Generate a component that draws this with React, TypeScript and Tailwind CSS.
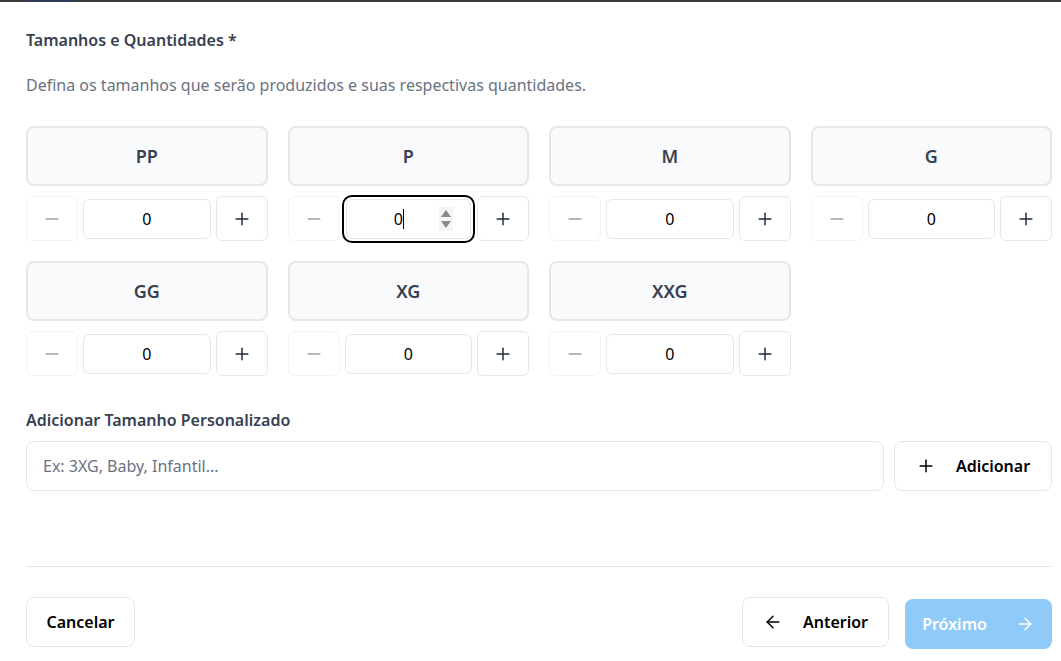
import { Minus, Plus, ArrowLeft, ArrowRight } from 'lucide-react';

const sizes = ['PP', 'P', 'M', 'G', 'GG', 'XG', 'XXG'];

function Spinner() {
    return (
        <svg width="14" height="24" viewBox="0 0 14 24" className="shrink-0">
            <rect x="0" y="0" width="14" height="24" fill="#f3f4f6" />
            <path d="M7 3 L12 10 L2 10 Z" fill="#8a8a8a" />
            <path d="M2 14 L12 14 L7 21 Z" fill="#8a8a8a" />
        </svg>
    );
}

function SizeCell({ label, focused }: { label: string; focused?: boolean }) {
    return (
        <div className="flex flex-col gap-[10px]">
            <div className="h-[60px] flex items-center justify-center rounded-lg border-2 border-gray-200 bg-gray-50">
                <span className="text-lg font-semibold text-[#374151]">{label}</span>
            </div>
            <div className="flex items-center gap-[5px]">
                <button className="w-[52px] h-[45px] shrink-0 flex items-center justify-center rounded-md border border-gray-100 bg-white text-gray-400">
                    <Minus className="w-5 h-5" strokeWidth={1.75} />
                </button>
                {focused ? (
                    <div className="flex-1 h-10 mx-[1px] flex items-center rounded-md border border-gray-200 bg-white pl-3 pr-[17px] outline-2 outline-offset-2 outline-black">
                        <div className="flex-1 flex justify-center items-center">
                            <span className="text-base text-black">0</span>
                            <span className="w-px h-5 bg-black" />
                        </div>
                        <Spinner />
                    </div>
                ) : (
                    <input
                        readOnly
                        value="0"
                        className="flex-1 min-w-0 h-10 rounded-md border border-gray-200 bg-white text-center text-base text-black outline-none"
                    />
                )}
                <button className="w-[52px] h-[45px] shrink-0 flex items-center justify-center rounded-md border border-gray-200 bg-white text-gray-800">
                    <Plus className="w-5 h-5" strokeWidth={1.75} />
                </button>
            </div>
        </div>
    );
}

export default function App() {
    return (
        <div className="w-[1061px] h-[661px] bg-white overflow-hidden font-['Noto_Sans',sans-serif]">
            <div className="h-[2px] bg-[#3b3b3b] flex">
                <div className="ml-[25px] w-[50px] bg-[#2b3a55]" />
            </div>
            <div className="pl-[26px] pr-[9px]">
                <h2 className="mt-[26px] text-base leading-6 font-semibold text-[#374151]">
                    Tamanhos e Quantidades *
                </h2>
                <p className="mt-[21px] text-base leading-6 text-gray-500">
                    Defina os tamanhos que serão produzidos e suas respectivas quantidades.
                </p>

                <div className="mt-[29px] grid grid-cols-4 gap-x-5 gap-y-5">
                    {sizes.map((s) => (
                        <SizeCell key={s} label={s} focused={s === 'P'} />
                    ))}
                </div>

                <h3 className="mt-[32px] text-base leading-6 font-semibold text-[#374151]">
                    Adicionar Tamanho Personalizado
                </h3>
                <div className="mt-[9px] flex gap-[10px]">
                    <input
                        placeholder="Ex: 3XG, Baby, Infantil..."
                        className="flex-1 h-[50px] rounded-lg border border-gray-200 px-4 text-base text-gray-900 placeholder:text-gray-500 outline-none"
                    />
                    <button className="w-[158px] h-[50px] flex items-center justify-center gap-5 rounded-lg border border-gray-200 bg-white text-base font-semibold text-black">
                        <Plus className="w-5 h-5" strokeWidth={1.75} />
                        Adicionar
                    </button>
                </div>

                <div className="mt-[75px] h-px bg-gray-200" />

                <div className="mt-[30px] flex items-start justify-between">
                    <button className="h-[50px] w-[109px] rounded-lg border border-gray-200 bg-white text-base font-semibold text-black">
                        Cancelar
                    </button>
                    <div className="flex gap-4">
                        <button className="h-[50px] w-[147px] flex items-center justify-center gap-5 rounded-lg border border-gray-200 bg-white text-base font-semibold text-black">
                            <ArrowLeft className="w-5 h-5" strokeWidth={1.75} />
                            Anterior
                        </button>
                        <button className="mt-[2px] h-[50px] w-[147px] flex items-center justify-center gap-7 rounded-lg bg-[#90caf9] text-base font-semibold text-white">
                            Próximo
                            <ArrowRight className="w-5 h-5" strokeWidth={1.75} />
                        </button>
                    </div>
                </div>
            </div>
        </div>
    );
}
